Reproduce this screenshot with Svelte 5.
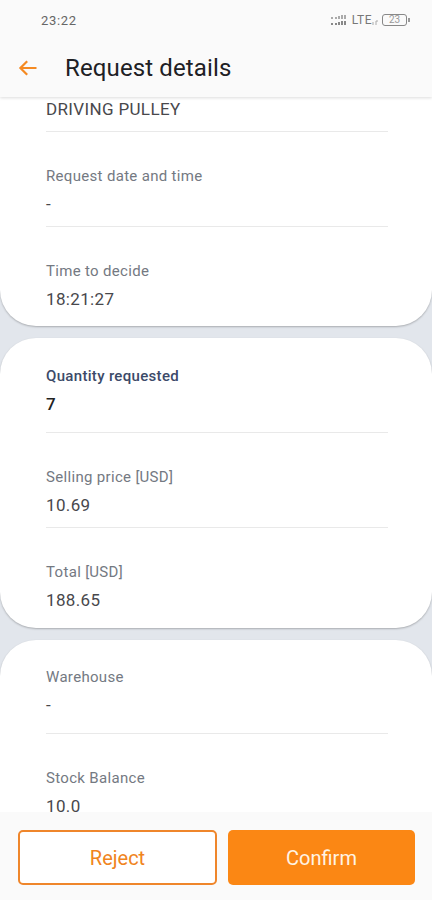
<script lang="ts">
  type Field = { label?: string; value: string; strong?: boolean; tall?: boolean };

  const cards: Field[][] = [
    [
      { value: 'DRIVING PULLEY' },
      { label: 'Request date and time', value: '-' },
      { label: 'Time to decide', value: '18:21:27' },
    ],
    [
      { label: 'Quantity requested', value: '7', strong: true, tall: true },
      { label: 'Selling price [USD]', value: '10.69' },
      { label: 'Total [USD]', value: '188.65' },
    ],
    [
      { label: 'Warehouse', value: '-', tall: true },
      { label: 'Stock Balance', value: '10.0' },
    ],
  ];
</script>

<div class="screen">
  <header>
    <div class="status">
      <span class="clock">23:22</span>
      <svg class="signal" width="17" height="12" viewBox="0 0 17 12">
        <g fill="#888">
          <path d="M1 3h2v2H1zM5 3h2v2H5zM8 2h2v3H8zM11 1h2v4h-2zM14 1h2v4h-2z" opacity=".7" />
          <path d="M1 9h2v2H1zM5 9h2v2H5zM8 8h2v3H8zM11 7h2v4h-2zM14 7h2v4h-2z" />
        </g>
      </svg>
      <span class="network">LTE</span>
      <svg class="data" width="6" height="6" viewBox="0 0 6 6">
        <path d="M1 5V2M4 5V1h2" fill="none" stroke="#aaa" />
      </svg>
      <span class="battery">23</span>
    </div>
    <div class="title-bar">
      <button class="back" aria-label="Back">
        <svg width="20" height="18" viewBox="0 0 20 18">
          <path d="M18.5 9H3M9.2 2.2L2.4 9l6.8 6.8" fill="none" stroke="#f58a22" stroke-width="2.2" />
        </svg>
      </button>
      <h1>Request details</h1>
    </div>
  </header>

  <main>
    {#each cards as fields}
      <section class="card">
        {#each fields as field}
          <div class="field" class:strong={field.strong} class:tall={field.tall}>
            {#if field.label}
              <div class="label">{field.label}</div>
            {/if}
            <div class="value">{field.value}</div>
          </div>
        {/each}
      </section>
    {/each}
  </main>

  <footer>
    <button class="reject">Reject</button>
    <button class="confirm">Confirm</button>
  </footer>
</div>

<style>
:global(body) {
  margin: 0;
}
.screen {
  display: flex;
  flex-direction: column;
  width: 432px;
  height: 900px;
  overflow: hidden;
  background: #e2e6ec;
  font-family: Roboto, sans-serif;
}
header {
  flex: none;
  height: 97px;
  box-sizing: border-box;
  background: #fafafa;
  box-shadow: 0 1px 3px rgba(0, 0, 0, 0.14);
  z-index: 1;
}
.status {
  display: flex;
  align-items: center;
  height: 40px;
  padding: 0 25px 0 41px;
  color: #666;
}
.clock {
  flex: 1;
  font-size: 13px;
  letter-spacing: 0.7px;
}
.network {
  margin-left: 5px;
  font-size: 12px;
  letter-spacing: 0.5px;
  color: #777;
}
.data {
  margin: 6px 4px 0 0;
}
.battery {
  position: relative;
  width: 25px;
  height: 12px;
  box-sizing: border-box;
  border: 1.5px solid #888;
  border-radius: 3px;
  font-size: 10px;
  line-height: 10px;
  text-align: center;
  color: #999;
}
.battery::after {
  content: '';
  position: absolute;
  top: 3px;
  right: -4px;
  width: 2px;
  height: 4px;
  background: #999;
}
.title-bar {
  display: flex;
  align-items: center;
  height: 56px;
  padding-left: 18px;
}
button {
  padding: 0;
  border: 0;
  background: none;
  font-family: inherit;
}
.back {
  display: flex;
  width: 47px;
}
h1 {
  margin: 0;
  font-size: 24px;
  font-weight: 400;
  letter-spacing: 0.13px;
  color: #202024;
}
main {
  flex: 1;
  min-height: 0;
  overflow: hidden;
}
.card {
  margin-bottom: 12px;
  padding: 28px 44px 18px 46px;
  border-radius: 36px;
  background: #fff;
  box-shadow: 0 1px 2px rgba(0, 0, 0, 0.25);
}
.card:first-child {
  padding-top: 2px;
  padding-bottom: 17px;
  border-radius: 0 0 36px 36px;
}
.card:last-child {
  padding-top: 27px;
  padding-bottom: 80px;
}
.field {
  padding-bottom: 12px;
  border-bottom: 1px solid #e9e9e9;
}
.field.tall {
  padding-bottom: 18px;
}
.field + .field {
  padding-top: 34px;
}
.field:last-child {
  padding-bottom: 0;
  border-bottom: 0;
}
.label {
  margin-bottom: 8px;
  font-size: 15px;
  line-height: 20px;
  letter-spacing: 0.32px;
  color: #747982;
}
.value {
  font-size: 17px;
  line-height: 20px;
  letter-spacing: 0.35px;
  color: #48484c;
}
.strong .label {
  font-weight: 500;
  color: #3c4a69;
}
.strong .value {
  font-weight: 500;
  color: #222;
}
footer {
  flex: none;
  display: flex;
  gap: 11px;
  height: 88px;
  box-sizing: border-box;
  padding: 18px 17px 15px 18px;
  background: #fafafa;
}
footer button {
  border-radius: 5px;
  font-size: 20px;
}
.reject {
  width: 199px;
  border: 2px solid #ef862b;
  background: #fff;
  color: #f08420;
}
.confirm {
  flex: 1;
  background: #fb8714;
  color: #fff3e4;
}
</style>
